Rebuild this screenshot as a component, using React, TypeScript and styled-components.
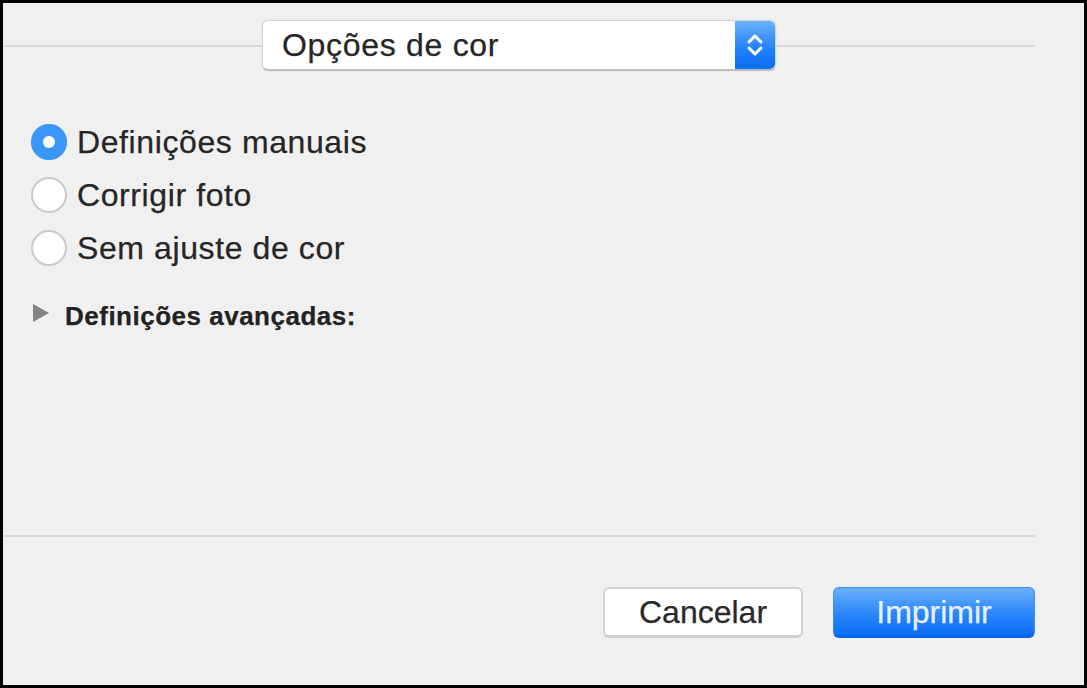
import styled, { createGlobalStyle } from 'styled-components'

const GlobalStyle = createGlobalStyle`
  html, body {
    margin: 0;
    padding: 0;
    background: #000;
  }
  body {
    font-family: 'Liberation Sans', Arial, sans-serif;
  }
`

const Frame = styled.div`
  box-sizing: border-box;
  width: 1087px;
  height: 688px;
  border: 3px solid #000;
  background: #f0f0f0;
  display: flex;
  flex-direction: column;
  color: #262626;
  -webkit-text-stroke: 0.25px currentColor;
`

const Header = styled.div`
  display: flex;
  align-items: center;
  padding: 17px 49px 0 0;
`

const Rule = styled.div`
  flex: 1;
  height: 2px;
  background: #dadada;
`

const PopupButton = styled.div`
  box-sizing: border-box;
  width: 514px;
  height: 51px;
  display: flex;
  align-items: stretch;
  background: #fff;
  border: 1px solid #d2d2d2;
  border-bottom: 2px solid #bdbdbd;
  border-radius: 6px;
  box-shadow: 0 0 2px rgba(0, 0, 0, 0.08);
  overflow: hidden;
`

const PopupLabel = styled.span`
  flex: 1;
  display: flex;
  align-items: center;
  padding-left: 19px;
  font-size: 32px;
  letter-spacing: 0.7px;
  line-height: 1;
`

const Stepper = styled.span`
  width: 40px;
  display: flex;
  align-items: center;
  justify-content: center;
  background: linear-gradient(#6cb0fb, #1f80fa 60%, #0a6ff8);
  border-radius: 0 5px 5px 0;
`

const Options = styled.div`
  display: flex;
  flex-direction: column;
  margin-top: 44px;
  padding-left: 28px;
`

const OptionRow = styled.label`
  height: 53px;
  display: flex;
  align-items: center;
  gap: 10px;
  font-size: 32px;
  letter-spacing: 0.6px;
  line-height: 32px;
`

const RadioDot = styled.span<{ $checked?: boolean }>`
  box-sizing: border-box;
  flex: none;
  width: 36px;
  height: 36px;
  border-radius: 50%;
  display: flex;
  align-items: center;
  justify-content: center;
  background: ${(p) => (p.$checked ? '#3b96fa' : '#fff')};
  border: ${(p) => (p.$checked ? '0' : '2px solid #cacaca')};
  box-shadow: ${(p) => (p.$checked ? '0 0 1px rgba(0,0,0,0.2)' : 'none')};

  &::after {
    content: '';
    display: ${(p) => (p.$checked ? 'block' : 'none')};
    width: 12px;
    height: 12px;
    border-radius: 50%;
    background: #fff;
  }
`

const Disclosure = styled.div`
  display: flex;
  align-items: center;
  gap: 16px;
  height: 30px;
  margin-top: 27px;
  padding-left: 30px;
  font-size: 26px;
  font-weight: 700;
  line-height: 26px;
  letter-spacing: 0.5px;
  color: #222;
`

const Triangle = styled.span`
  width: 0;
  height: 0;
  margin-bottom: 7px;
  border-top: 9px solid transparent;
  border-bottom: 9px solid transparent;
  border-left: 16px solid #858585;
`

const Footer = styled.div`
  margin-top: auto;
  display: flex;
  flex-direction: column;
  padding-right: 49px;
`

const FooterRule = styled.div`
  height: 2px;
  background: #dadada;
`

const Buttons = styled.div`
  display: flex;
  justify-content: flex-end;
  gap: 30px;
  padding: 50px 0 47px;
`

const Button = styled.button<{ $primary?: boolean }>`
  box-sizing: border-box;
  height: 51px;
  width: ${(p) => (p.$primary ? '202px' : '200px')};
  border-radius: 6px;
  font-family: 'Liberation Sans', Arial, sans-serif;
  font-size: 32px;
  line-height: 1;
  padding: 0;
  -webkit-text-stroke: 0.25px currentColor;
  color: ${(p) => (p.$primary ? '#e8efff' : '#2a2a2a')};
  background: ${(p) => (p.$primary ? 'linear-gradient(#6aaffc, #2a86fa 55%, #0b6ef8)' : '#fff')};
  border: ${(p) => (p.$primary ? '1px solid #3f8ef7' : '2px solid #d4d4d4')};
  border-bottom: ${(p) => (p.$primary ? '3px solid #0862f0' : '3px solid #cfcfcf')};
`

const StepperIcon = () => (
  <svg width="20" height="28" viewBox="0 0 20 28" fill="none">
    <path d="M4 11 L10 5 L16 11" stroke="#fff" strokeWidth="3" strokeLinecap="round" strokeLinejoin="round" />
    <path d="M4 17 L10 23 L16 17" stroke="#fff" strokeWidth="3" strokeLinecap="round" strokeLinejoin="round" />
  </svg>
)

const options = [
  { label: 'Definições manuais', checked: true },
  { label: 'Corrigir foto', checked: false },
  { label: 'Sem ajuste de cor', checked: false },
]

const App = () => {
  return (
    <>
      <GlobalStyle />
      <Frame>
        <Header>
          <Rule />
          <PopupButton>
            <PopupLabel>Opções de cor</PopupLabel>
            <Stepper>
              <StepperIcon />
            </Stepper>
          </PopupButton>
          <Rule />
        </Header>

        <Options>
          {options.map((o) => (
            <OptionRow key={o.label}>
              <RadioDot $checked={o.checked} />
              {o.label}
            </OptionRow>
          ))}
        </Options>

        <Disclosure>
          <Triangle />
          Definições avançadas:
        </Disclosure>

        <Footer>
          <FooterRule />
          <Buttons>
            <Button>Cancelar</Button>
            <Button $primary>Imprimir</Button>
          </Buttons>
        </Footer>
      </Frame>
    </>
  )
}

export default App
